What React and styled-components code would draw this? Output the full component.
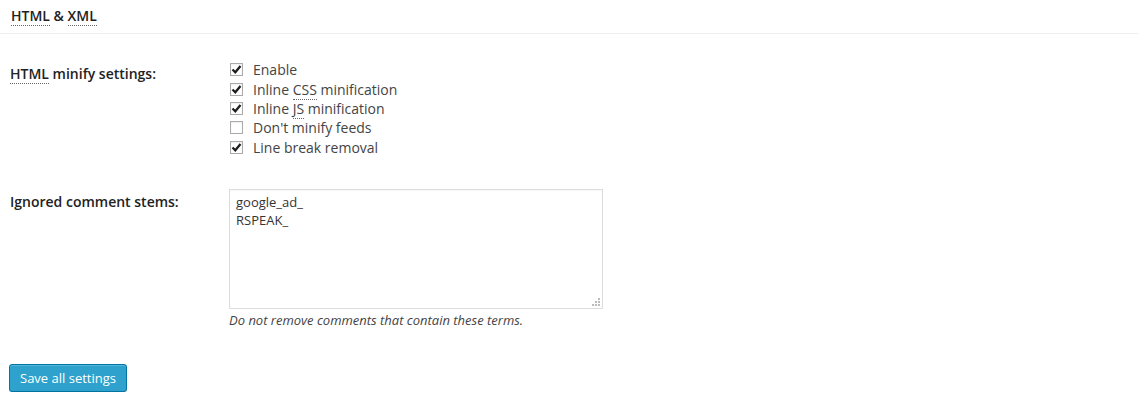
import React from "react";
import styled, { createGlobalStyle } from "styled-components";

const GlobalStyle = createGlobalStyle`
  body {
    margin: 0;
    background: #fff;
    font-family: "Open Sans", "Liberation Sans", sans-serif;
    font-size: 14px;
    color: #444;
  }
`;

const options = [
  { label: "Enable", checked: true },
  { label: "Inline", abbr: "CSS", rest: "minification", checked: true },
  { label: "Inline", abbr: "JS", rest: "minification", checked: true },
  { label: "Don't minify feeds", checked: false },
  { label: "Line break removal", checked: true },
];

const Check = ({ checked }) => (
  <Box>
    {checked && (
      <svg width="11" height="11" viewBox="0 0 11 11">
        <path d="M1.5 5.5 L4.3 8.3 L9.5 2" fill="none" stroke="#1e1e1e" strokeWidth="2.3" />
      </svg>
    )}
  </Box>
);

const App = () => (
  <Page>
    <GlobalStyle />
    <Heading>
      <Abbr>HTML</Abbr> &amp; <Abbr>XML</Abbr>
    </Heading>

    <FormTable>
      <Label $top={4}>
        <Abbr>HTML</Abbr> minify settings:
      </Label>
      <Field>
        <CheckList>
          {options.map((o, i) => (
            <CheckRow key={i}>
              <Check checked={o.checked} />
              <span>
                {o.label}
                {o.abbr && (
                  <>
                    {" "}
                    <Abbr>{o.abbr}</Abbr> {o.rest}
                  </>
                )}
              </span>
            </CheckRow>
          ))}
        </CheckList>
      </Field>

      <Label $top={3}>Ignored comment stems:</Label>
      <Field>
        <AreaWrap>
          <TextArea defaultValue={"google_ad_\nRSPEAK_"} spellCheck={false} />
          <Grip>
            <svg width="10" height="10" viewBox="0 0 10 10">
              {[[7, 1], [4, 4], [7, 4], [1, 7], [4, 7], [7, 7]].map(([x, y], i) => (
                <rect key={i} x={x} y={y} width="2" height="2" fill="#bbb" />
              ))}
            </svg>
          </Grip>
        </AreaWrap>
        <Description>Do not remove comments that contain these terms.</Description>
      </Field>
    </FormTable>

    <SaveButton>Save all settings</SaveButton>
  </Page>
);

const Page = styled.div`
  padding: 6px 0 0 0;
`;

const Heading = styled.h3`
  margin: 0;
  padding: 0 11px 8px;
  font-size: 14px;
  font-weight: 600;
  color: #222;
  line-height: 19px;
  border-bottom: 1px solid #eee;
`;

const Abbr = styled.abbr`
  text-decoration: none;
  border-bottom: 1px dotted #666;
`;

const FormTable = styled.div`
  display: grid;
  grid-template-columns: 219px 1fr;
  row-gap: 32px;
  padding: 26px 0 0 10px;
`;

const Label = styled.div`
  font-weight: 600;
  color: #222;
  line-height: 20px;
  padding-top: ${(p) => p.$top || 0}px;
`;

const Field = styled.div`
  display: flex;
  flex-direction: column;
`;

const CheckList = styled.div`
  display: flex;
  flex-direction: column;
`;

const CheckRow = styled.label`
  display: flex;
  align-items: center;
  gap: 10px;
  height: 19.4px;
  padding-left: 1px;
`;

const Box = styled.span`
  box-sizing: border-box;
  width: 13px;
  height: 13px;
  border: 1px solid #aaa;
  background: #fff;
  display: flex;
  align-items: center;
  justify-content: center;
  box-shadow: inset 0 1px 2px rgba(0, 0, 0, 0.07);
`;

const AreaWrap = styled.div`
  position: relative;
  width: 374px;
  height: 120px;
`;

const TextArea = styled.textarea`
  box-sizing: border-box;
  width: 100%;
  height: 100%;
  margin: 0;
  padding: 3px 6px;
  border: 1px solid #ddd;
  font-family: "Open Sans", "Liberation Sans", sans-serif;
  font-size: 13px;
  line-height: 18px;
  color: #333;
  resize: none;
  outline: none;
  box-shadow: inset 0 1px 2px rgba(0, 0, 0, 0.04);
`;

const Grip = styled.span`
  position: absolute;
  right: 2px;
  bottom: 2px;
  display: flex;
`;

const Description = styled.p`
  margin: 2px 0 0;
  font-size: 13px;
  font-style: italic;
  color: #444;
`;

const SaveButton = styled.button`
  margin: 35px 0 0 9px;
  height: 28px;
  padding: 0 10px;
  background: #2ea2cc;
  border: 1px solid #0074a2;
  border-radius: 3px;
  color: #fff;
  font-family: "Open Sans", "Liberation Sans", sans-serif;
  font-size: 13px;
  box-shadow: inset 0 1px 0 rgba(120, 200, 230, 0.5), 0 1px 0 rgba(0, 0, 0, 0.15);
`;

export default App;
